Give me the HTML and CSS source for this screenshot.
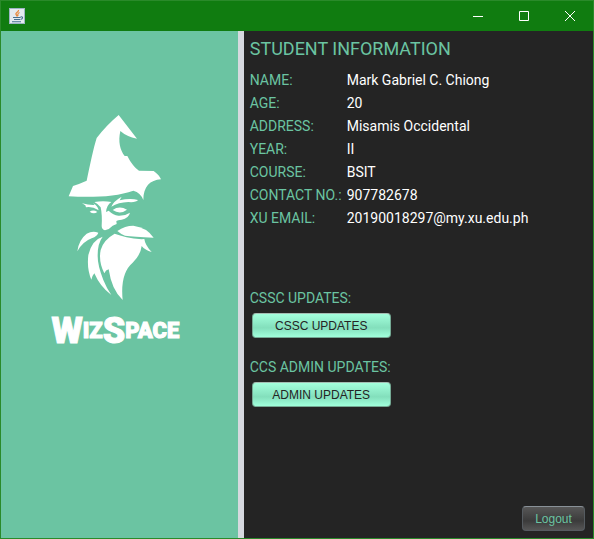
FILE: index.html
```html
<!DOCTYPE html>
<html lang="en">
<head>
<meta charset="utf-8">
<title>WizSpace</title>
<link rel="stylesheet" href="styles.css">
</head>
<body>
<div class="window">
  <header class="titlebar">
    <svg class="app-icon" viewBox="0 0 16 16" aria-hidden="true">
      <rect width="16" height="16" rx="1" fill="#e4eaf0"/>
      <path d="M.5 15V.5H15.5V15.5H.5z" fill="none" stroke="#9db4c4"/>
      <path d="M9.500 2C10 4 6 4.500 7 6.500l1.500 2M10.500 4.500C8.500 5.500 8.500 6 9 8" fill="none" stroke="#e8873a" stroke-width="1.300"/>
      <path d="M4 9.500h7.500M5 11.500h6M3 13.700h9M11.500 9c3-1 2.500 2 0 2.500" fill="none" stroke="#46708f" stroke-width="1.100"/>
    </svg>
    <div class="controls">
      <button class="control" aria-label="Minimize"><svg viewBox="0 0 12 12"><path d="M1 6.500h10"/></svg></button>
      <button class="control" aria-label="Maximize"><svg viewBox="0 0 12 12"><path d="M1.500 1.500h9v9h-9z"/></svg></button>
      <button class="control" aria-label="Close"><svg viewBox="0 0 12 12"><path d="M1 1l10 10M11 1L1 11"/></svg></button>
    </div>
  </header>
  <main class="content">
    <aside class="brand">
      <svg class="wizard" viewBox="0 0 390 600" aria-hidden="true">
        <path d="M206 30L261 101Q230 95 211 78C204 110 210 135 224 153L232 153C243 175 255 188 267 197L311 198Q327 209 333 223C300 225 280 245 280 285Q272 263 250 257C200 275 130 278 56 274L69 243Q90 236 110 227C120 180 130 130 140 99Q170 60 206 30Z"/>
        <g transform="translate(0 255)">
          <path d="M96 40Q118 46 134 45L129 40Q143 47 146 61Q125 48 108 52L106 46Z"/>
          <path d="M119 65Q130 58 142 66Q131 74 119 65Z"/>
          <path d="M133 36Q160 31 184 36Q170 45 168 66L176 62Q190 75 205 77Q225 78 240 68Q236 85 215 89Q203 90 199 93L200 102L188 107Q178 118 165 121Q155 118 155 108Q157 75 152 52Q145 42 133 36Z"/>
          <path d="M188 60Q208 46 231 59Q210 75 188 60Z"/>
          <path d="M184 50Q190 34 215 20L209 31Q240 24 264 30Q258 38 235 36Q205 37 184 50Z"/>
          <path d="M202 123Q225 107 250 107Q290 112 311 143Q250 140 225 137Q213 133 202 123Z"/>
          <path d="M82 184Q86 150 110 131Q128 121 145 128Q143 138 125 145Q98 155 82 184Z"/>
          <path d="M158 140Q143 160 143 195Q142 225 160 270Q170 295 184 315Q150 290 133 250Q126 258 124 269Q110 235 115 195Q125 150 158 140Z"/>
          <path d="M194 131Q225 143 275 148L283 147Q285 165 305 186Q285 180 275 168Q272 195 248 218Q210 250 218 330Q185 300 176 238Q167 240 163 250Q145 215 152 180Q160 150 194 131Z"/>
        </g>
      </svg>
      <div class="wordmark"><span class="big">W</span><span>IZ</span><span class="big">S</span><span>PACE</span></div>
    </aside>
    <section class="info">
      <h1>STUDENT INFORMATION</h1>
      <dl class="details">
        <dt>NAME:</dt><dd>Mark Gabriel C. Chiong</dd>
        <dt>AGE:</dt><dd>20</dd>
        <dt>ADDRESS:</dt><dd>Misamis Occidental</dd>
        <dt>YEAR:</dt><dd>II</dd>
        <dt>COURSE:</dt><dd>BSIT</dd>
        <dt>CONTACT NO.:</dt><dd>907782678</dd>
        <dt>XU EMAIL:</dt><dd>20190018297@my.xu.edu.ph</dd>
      </dl>
      <div class="updates">
        <h2>CSSC UPDATES:</h2>
        <button class="button">CSSC UPDATES</button>
        <h2>CCS ADMIN UPDATES:</h2>
        <button class="button">ADMIN UPDATES</button>
      </div>
      <button class="button logout">Logout</button>
    </section>
  </main>
</div>
</body>
</html>
```
FILE: styles.css
```css
* { box-sizing: border-box; }
body {
  margin: 0;
  font-family: Tahoma, Roboto, sans-serif;
  font-size: 14px;
}
.window {
  display: flex;
  flex-direction: column;
  min-height: 100vh;
  border: 1px solid #2a8a2a;
}
.titlebar {
  display: flex;
  justify-content: space-between;
  align-items: center;
  height: 30px;
  padding-left: 8px;
  background: #107c10;
}
.app-icon { width: 16px; height: 16px; }
.controls { display: flex; }
.control {
  display: flex;
  align-items: center;
  justify-content: center;
  width: 46px;
  height: 30px;
  padding: 0;
  border: 0;
  background: none;
}
.control svg {
  width: 12px;
  height: 12px;
  fill: none;
  stroke: #fff;
}
.content {
  display: grid;
  grid-template-columns: 41fr 59fr;
  flex: 1;
}
.brand {
  display: flex;
  flex-direction: column;
  align-items: center;
  padding: 74px 8px 0 0;
  border-right: 6px solid #d6d9df;
  background: #6bc4a2;
  color: #fff;
}
.wizard {
  width: 130px;
  height: 200px;
  fill: #fff;
}
.wordmark {
  display: flex;
  align-items: center;
  margin-top: 6px;
  font: 900 22px/40px Roboto, sans-serif;
  -webkit-text-stroke: 1px #fff;
}
.big { font-size: 36px; }
.info {
  display: flex;
  flex-direction: column;
  padding: 6px 8px 6px 6px;
  background: #242424;
  color: #6bc4a2;
}
h1 {
  margin: 0 0 8px;
  font-size: 18px;
  font-weight: 400;
  line-height: 24px;
}
.details {
  display: grid;
  grid-template-columns: 97px 1fr;
  margin: 0;
  line-height: 23px;
}
dd { margin: 0; color: #fff; }
.updates {
  display: flex;
  flex-direction: column;
  align-items: flex-start;
  padding-top: 56px;
}
h2 {
  margin: 0;
  font-size: 14px;
  font-weight: 400;
  line-height: 24px;
}
.button {
  width: 139px;
  height: 25px;
  margin: 3px 2px 17px;
  padding: 0;
  border: 1px solid #74a994;
  border-top-color: #a5bdb3;
  border-radius: 4px;
  background: linear-gradient(#a3ffdc, #83dfbc 60%, #a0ffdb);
  color: #242424;
  font: 12px "Liberation Sans", sans-serif;
}
.logout {
  align-self: flex-end;
  width: 63px;
  margin: auto 0 1px;
  border-color: #555b60;
  border-top-color: #899198;
  background: linear-gradient(#575757, #3b3b3b 60%, #565656);
  color: #6bc4a2;
}
```
